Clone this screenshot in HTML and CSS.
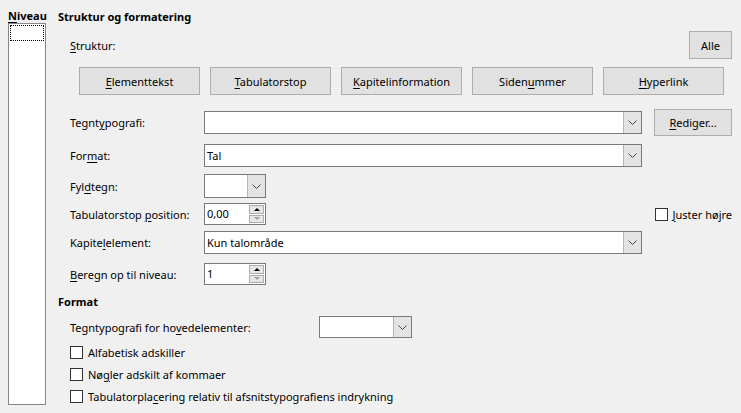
FILE: index.html
```html
<!DOCTYPE html>
<html lang="da">
<head>
<meta charset="utf-8">
<link rel="stylesheet" href="styles.css">
</head>
<body>
<div class="page">
  <aside class="side">
    <div class="side-label"><u>N</u>iveau</div>
    <div class="listbox"><div class="focus"></div></div>
  </aside>
  <main class="main">
    <h2 class="head">Struktur og formatering</h2>
    <div class="struct-row">
      <span class="lbl"><u>S</u>truktur:</span>
      <button class="btn alle">Alle</button>
    </div>
    <div class="btn-row">
      <button class="btn wide"><u>E</u>lementtekst</button>
      <button class="btn wide"><u>T</u>abulatorstop</button>
      <button class="btn wide"><u>K</u>apitelinformation</button>
      <button class="btn wide">Siden<u>u</u>mmer</button>
      <button class="btn wide"><u>H</u>yperlink</button>
    </div>
    <div class="form">
      <div class="row r1">
        <span class="lbl">Tegnt<u>y</u>pografi:</span>
        <div class="combo long"><span class="val"></span><span class="drop"><svg width="9" height="5" viewBox="0 0 9 5"><path d="M0.5 0.5 L4.5 4.5 L8.5 0.5" fill="none" stroke="#444" stroke-width="1"/></svg></span></div>
        <button class="btn edit"><u>R</u>ediger...</button>
      </div>
      <div class="row r2">
        <span class="lbl">For<u>m</u>at:</span>
        <div class="combo long"><span class="val">Tal</span><span class="drop"><svg width="9" height="5" viewBox="0 0 9 5"><path d="M0.5 0.5 L4.5 4.5 L8.5 0.5" fill="none" stroke="#444" stroke-width="1"/></svg></span></div>
      </div>
      <div class="row r3">
        <span class="lbl">Fyl<u>d</u>tegn:</span>
        <div class="combo short tall"><span class="val"></span><span class="drop"><svg width="9" height="5" viewBox="0 0 9 5"><path d="M0.5 0.5 L4.5 4.5 L8.5 0.5" fill="none" stroke="#444" stroke-width="1"/></svg></span></div>
      </div>
      <div class="row r4">
        <span class="lbl">Tabulatorstop <u>p</u>osition:</span>
        <div class="spin"><span class="val">0,00</span><span class="arrows"><span class="up"></span><span class="down"></span></span></div>
        <label class="check right"><span class="box"></span><span><u>J</u>uster højre</span></label>
      </div>
      <div class="row r5">
        <span class="lbl">Kapite<u>l</u>element:</span>
        <div class="combo long"><span class="val">Kun talområde</span><span class="drop"><svg width="9" height="5" viewBox="0 0 9 5"><path d="M0.5 0.5 L4.5 4.5 L8.5 0.5" fill="none" stroke="#444" stroke-width="1"/></svg></span></div>
      </div>
      <div class="row r6">
        <span class="lbl"><u>B</u>eregn op til niveau:</span>
        <div class="spin"><span class="val">1</span><span class="arrows"><span class="up"></span><span class="down"></span></span></div>
      </div>
    </div>
    <h2 class="head head2">Format</h2>
    <div class="fmt">
      <div class="fmt-row">
        <span class="lbl">Tegntypografi for ho<u>v</u>edelementer:</span>
        <div class="combo mid"><span class="val"></span><span class="drop"><svg width="9" height="5" viewBox="0 0 9 5"><path d="M0.5 0.5 L4.5 4.5 L8.5 0.5" fill="none" stroke="#444" stroke-width="1"/></svg></span></div>
      </div>
      <label class="check"><span class="box"></span><span>Alfabetisk adskiller</span></label>
      <label class="check"><span class="box"></span><span>Nø<u>g</u>ler adskilt af kommaer</span></label>
      <label class="check"><span class="box"></span><span>Tabulatorpla<u>c</u>ering relativ til afsnitstypografiens indrykning</span></label>
    </div>
  </main>
</div>
</body>
</html>
```
FILE: styles.css
```css
* { box-sizing: border-box; }
html, body { margin: 0; padding: 0; }
body {
  background: #f0f0f0;
  color: #000;
  font-family: "Noto Sans", "Liberation Sans", sans-serif;
  font-size: 11px;
  line-height: 15px;
  width: 741px;
  height: 413px;
  overflow: hidden;
}
u { text-decoration: underline; text-underline-offset: 2px; }
.page { display: flex; padding: 8px 0 0 8px; }
.side { width: 38px; display: flex; flex-direction: column; }
.side-label { font-weight: bold; height: 15px; }
.listbox {
  margin-top: 0;
  height: 382px;
  background: #fff;
  border: 1px solid #828790;
  padding: 1px;
}
.focus { height: 16px; border: 1px dotted #000; }
.main { margin-left: 12px; width: 674px; display: flex; flex-direction: column; }
.head { font-size: 11px; font-weight: bold; margin: 1px 0 0 0; line-height: 15px; }
.struct-row { display: flex; justify-content: space-between; align-items: center; margin-top: 7px; padding-left: 12px; }
.btn {
  font: inherit;
  background: #e1e1e1;
  border: 1px solid #adadad;
  color: #000;
  padding: 0;
  border-radius: 0;
}
.alle { width: 43px; height: 28px; }
.btn-row { display: flex; gap: 10px; margin-top: 8px; padding-left: 21px; }
.wide { width: 121px; height: 28px; }
.form { display: flex; flex-direction: column; margin-top: 14px; padding-left: 12px; }
.row { display: flex; align-items: center; }
.lbl { display: inline-block; }
.row .lbl { width: 134px; }
.r1 { height: 27px; }
.r2 { margin-top: 8px; }
.r3 { margin-top: 7px; }
.r4 { margin-top: 5px; height: 22px; }
.r5 { margin-top: 6px; }
.r6 { margin-top: 9px; }
.combo {
  display: flex;
  height: 23px;
  background: #fff;
  border: 1px solid #7a7a7a;
}
.combo .val { flex: 1; padding-left: 2px; line-height: 21px; }
.drop {
  width: 18px;
  background: #e3e3e3;
  border-left: 1px solid #b4b4b4;
  display: flex;
  align-items: center;
  justify-content: center;
}
.long { width: 438px; }
.short { width: 62px; }
.tall { height: 24px; }
.mid { width: 93px; height: 22px; }
.edit { width: 78px; height: 27px; margin-left: 12px; }
.spin {
  display: flex;
  width: 62px;
  height: 22px;
  background: #fff;
  border: 1px solid #7a7a7a;
}
.spin .val { flex: 1; padding-left: 2px; line-height: 20px; }
.arrows { width: 16px; display: flex; flex-direction: column; padding: 1px 1px 1px 0; gap: 1px; }
.arrows span {
  flex: 1;
  background: #e6e6e6;
  border: 1px solid #acacac;
  display: flex; align-items: center; justify-content: center;
}
.up::before { content: ""; border-left: 3px solid transparent; border-right: 3px solid transparent; border-bottom: 3px solid #000; }
.down::before { content: ""; border-left: 3px solid transparent; border-right: 3px solid transparent; border-top: 3px solid #a0a0a0; }
.check { display: flex; align-items: center; gap: 5px; white-space: nowrap; }
.box { width: 13px; height: 13px; background: #fff; border: 1px solid #333; flex: none; }
.right { margin-left: auto; }
.head2 { margin-top: 9px; }
.fmt { display: flex; flex-direction: column; padding-left: 12px; margin-top: 7px; gap: 6px; }
.fmt-row { display: flex; align-items: center; }
.fmt-row .lbl { width: 249px; }
.fmt .check { height: 16px; }
```
